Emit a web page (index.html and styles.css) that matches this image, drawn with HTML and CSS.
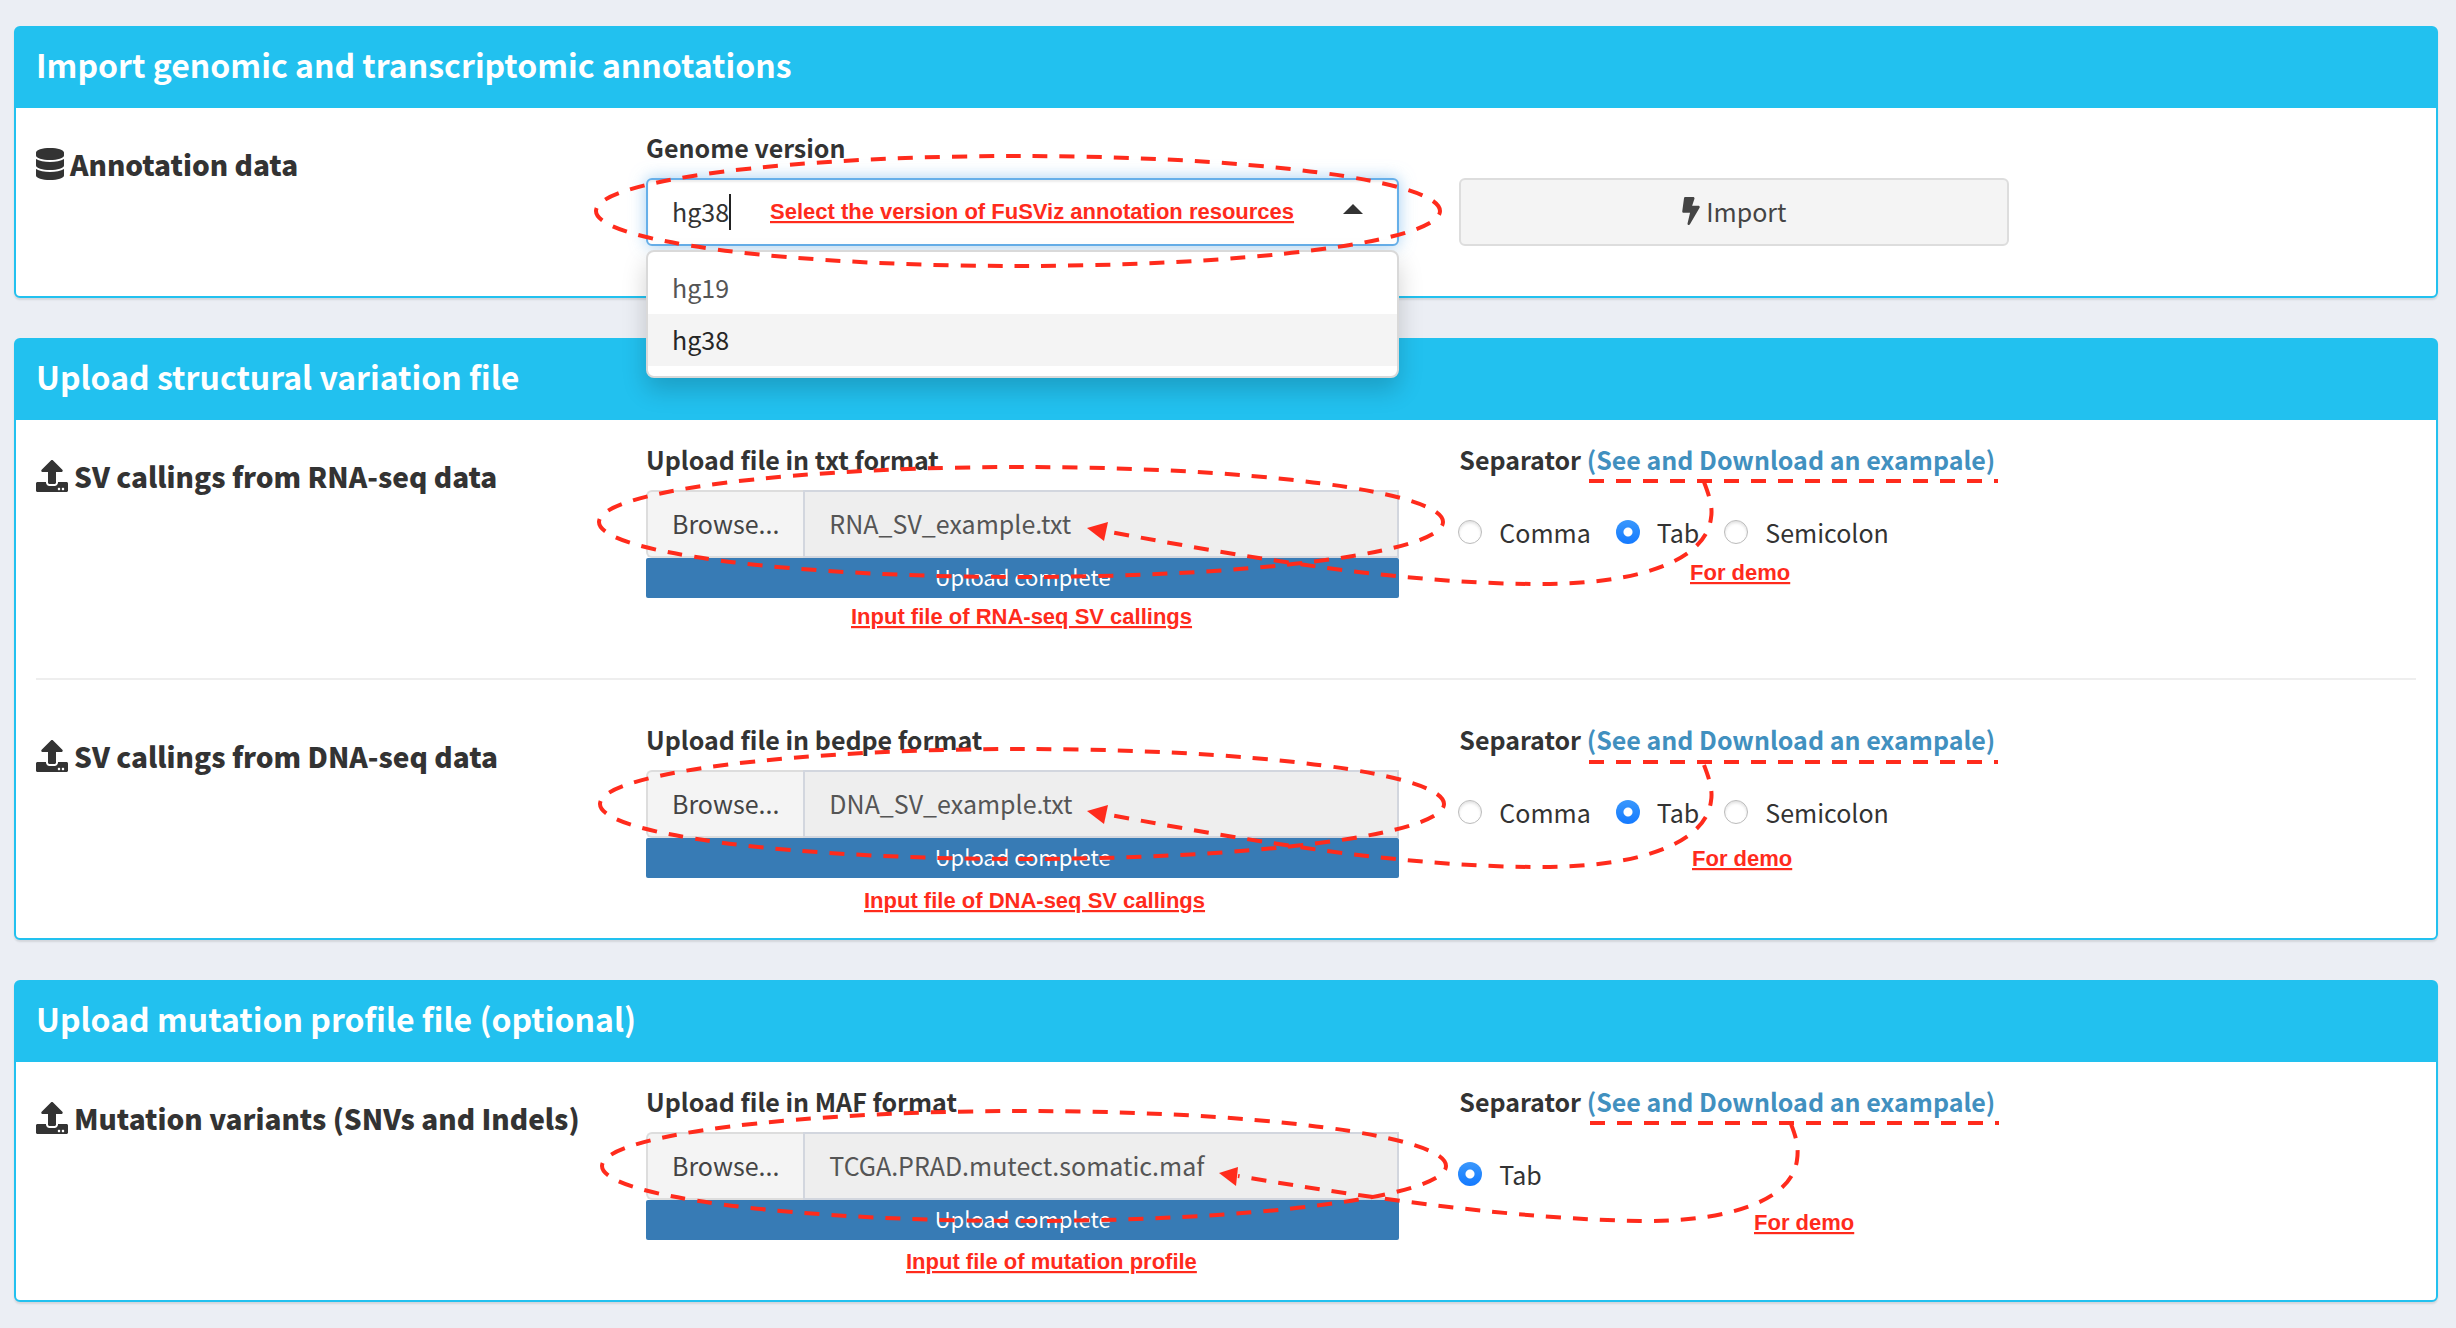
FILE: index.html
```html
<!DOCTYPE html>
<html lang="en">
<head>
<meta charset="utf-8">
<title>FuSViz data import</title>
<link rel="stylesheet" href="styles.css">
</head>
<body>
<svg class="sprite" aria-hidden="true">
  <symbol id="icon-database" viewBox="0 0 448 512"><path d="M448 73.143v45.714C448 159.143 347.667 192 224 192S0 159.143 0 118.857V73.143C0 32.857 100.333 0 224 0s224 32.857 224 73.143zM448 176v102.857C448 319.143 347.667 352 224 352S0 319.143 0 278.857V176c48.125 33.143 136.208 48.572 224 48.572S399.874 209.143 448 176zm0 160v102.857C448 479.143 347.667 512 224 512S0 479.143 0 438.857V336c48.125 33.143 136.208 48.572 224 48.572S399.874 369.143 448 336z"/></symbol>
  <symbol id="icon-upload" viewBox="0 0 512 512"><path d="M296 384h-80c-13.300 0-24-10.700-24-24V192h-87.700c-17.800 0-26.700-21.500-14.100-34.100L242.300 5.700c7.500-7.500 19.800-7.500 27.300 0l152.200 152.200c12.600 12.600 3.700 34.100-14.100 34.100H320v168c0 13.300-10.700 24-24 24zm216-8v112c0 13.300-10.700 24-24 24H24c-13.300 0-24-10.700-24-24V376c0-13.300 10.700-24 24-24h136v8c0 30.900 25.100 56 56 56h80c30.900 0 56-25.100 56-56v-8h136c13.300 0 24 10.700 24 24zm-124 88c0-11-9-20-20-20s-20 9-20 20 9 20 20 20 20-9 20-20zm64 0c0-11-9-20-20-20s-20 9-20 20 9 20 20 20 20-9 20-20z"/></symbol>
  <symbol id="icon-bolt" viewBox="0 0 320 512"><path d="M296 160H180.600l42.600-129.800C227.200 15 215.700 0 200 0H56C44 0 33.800 8.900 32.200 20.800l-32 240C-1.700 275.200 9.500 288 24 288h118.700L96.600 482.500c-3.600 15.200 8 29.500 23.300 29.500 8.400 0 16.400-4.400 20.800-12l176-304c9.300-15.900-2.200-36-20.700-36z"/></symbol>
</svg>

<main class="page">
  <section class="box">
    <h3 class="box-title">Import genomic and transcriptomic annotations</h3>
    <div class="box-body">
      <div class="row">
        <h4 class="row-title"><svg class="icon icon-db"><use href="#icon-database"/></svg>Annotation data</h4>
        <div class="field">
          <label class="field-label" for="genome">Genome version</label>
          <div class="select">
            <input class="select-input" id="genome" type="text" value="hg38" role="combobox" aria-expanded="true" aria-controls="genome-list">
            <span class="select-caret"></span>
            <span class="select-arrow"></span>
            <ul class="menu" id="genome-list" role="listbox">
              <li class="option" role="option">hg19</li>
              <li class="option option-active" role="option" aria-selected="true">hg38</li>
            </ul>
          </div>
          <svg class="notes">
            <ellipse class="dash" cx="372" cy="83" rx="422" ry="55"/>
            <text class="note" x="124" y="91">Select the version of FuSViz annotation resources</text>
          </svg>
        </div>
        <div class="side side-button">
          <button class="button" type="button"><svg class="icon-bolt"><use href="#icon-bolt"/></svg>Import</button>
        </div>
      </div>
    </div>
  </section>

  <section class="box">
    <h3 class="box-title">Upload structural variation file</h3>
    <div class="box-body">
      <div class="row">
        <h4 class="row-title"><svg class="icon"><use href="#icon-upload"/></svg>SV callings from RNA-seq data</h4>
        <div class="field">
          <label class="field-label" for="rna-file">Upload file in txt format</label>
          <div class="file">
            <button class="browse" type="button">Browse...</button>
            <input class="file-name" id="rna-file" type="text" value="RNA_SV_example.txt" readonly>
          </div>
          <div class="progress">Upload complete</div>
          <svg class="notes">
            <ellipse class="dash" cx="375" cy="82" rx="422" ry="55"/>
            <text class="note" x="205" y="184">Input file of RNA-seq SV callings</text>
          </svg>
        </div>
        <div class="side">
          <div class="field-label">Separator <a class="link" href="#rna-example">(See and Download an exampale)</a></div>
          <div class="radios">
            <label class="radio"><input type="radio" name="rna-sep">Comma</label>
            <label class="radio"><input type="radio" name="rna-sep" checked>Tab</label>
            <label class="radio"><input type="radio" name="rna-sep">Semicolon</label>
          </div>
          <svg class="notes">
            <path class="dash dash-line" d="M130 41H539"/>
            <path class="dash dash-line" d="M245 42C250 55 254 67 252 78C247 120 181 145 76 144C-59 143 -199 120 -354 91"/>
            <path class="head" d="M-372 88L-351 82L-355 101Z"/>
            <text class="note" x="231" y="140">For demo</text>
          </svg>
        </div>
      </div>
      <hr class="divider">
      <div class="row">
        <h4 class="row-title"><svg class="icon"><use href="#icon-upload"/></svg>SV callings from DNA-seq data</h4>
        <div class="field">
          <label class="field-label" for="dna-file">Upload file in bedpe format</label>
          <div class="file">
            <button class="browse" type="button">Browse...</button>
            <input class="file-name" id="dna-file" type="text" value="DNA_SV_example.txt" readonly>
          </div>
          <div class="progress">Upload complete</div>
          <svg class="notes">
            <ellipse class="dash" cx="376" cy="84" rx="422" ry="55"/>
            <text class="note" x="218" y="188">Input file of DNA-seq SV callings</text>
          </svg>
        </div>
        <div class="side">
          <div class="field-label">Separator <a class="link" href="#dna-example">(See and Download an exampale)</a></div>
          <div class="radios">
            <label class="radio"><input type="radio" name="dna-sep">Comma</label>
            <label class="radio"><input type="radio" name="dna-sep" checked>Tab</label>
            <label class="radio"><input type="radio" name="dna-sep">Semicolon</label>
          </div>
          <svg class="notes">
            <path class="dash dash-line" d="M130 42H539"/>
            <path class="dash dash-line" d="M245 45C250 58 254 70 252 81C247 123 181 148 76 147C-59 146 -199 123 -354 94"/>
            <path class="head" d="M-372 91L-351 85L-355 104Z"/>
            <text class="note" x="233" y="146">For demo</text>
          </svg>
        </div>
      </div>
    </div>
  </section>

  <section class="box">
    <h3 class="box-title">Upload mutation profile file (optional)</h3>
    <div class="box-body">
      <div class="row">
        <h4 class="row-title"><svg class="icon"><use href="#icon-upload"/></svg>Mutation variants (SNVs and Indels)</h4>
        <div class="field">
          <label class="field-label" for="maf-file">Upload file in MAF format</label>
          <div class="file">
            <button class="browse" type="button">Browse...</button>
            <input class="file-name" id="maf-file" type="text" value="TCGA.PRAD.mutect.somatic.maf" readonly>
          </div>
          <div class="progress">Upload complete</div>
          <svg class="notes">
            <ellipse class="dash" cx="378" cy="84" rx="422" ry="55"/>
            <text class="note" x="260" y="187">Input file of mutation profile</text>
          </svg>
        </div>
        <div class="side">
          <div class="field-label">Separator <a class="link" href="#maf-example">(See and Download an exampale)</a></div>
          <div class="radios">
            <label class="radio"><input type="radio" name="maf-sep" checked>Tab</label>
          </div>
          <svg class="notes">
            <path class="dash dash-line" d="M131 41H540"/>
            <path class="dash dash-line" d="M332 42C337 55 340 65 338 78C333 118 271 140 181 139C61 137 -79 118 -221 94"/>
            <path class="head" d="M-240 91L-221 85L-223 104Z"/>
            <text class="note" x="295" y="148">For demo</text>
          </svg>
        </div>
      </div>
    </div>
  </section>
</main>
</body>
</html>
```
FILE: styles.css
```css
* { box-sizing: border-box; }

body {
  margin: 0;
  background: #ebeef4;
  color: #333;
  font: 25px/40px "Noto Sans CJK SC", "Noto Sans", sans-serif;
}

input, button { font: inherit; }

.sprite { position: absolute; width: 0; height: 0; }

.page {
  display: flex;
  flex-direction: column;
  gap: 40px;
  padding: 26px 18px 26px 14px;
}

.box {
  border: 2px solid #22c1ef;
  border-radius: 6px;
  background: #fff;
  box-shadow: 0 2px 2px rgba(0, 0, 0, .1);
}

.box-title {
  margin: 0;
  padding: 16px 20px 24px;
  background: #22c1ef;
  color: #fff;
  font-size: 32px;
  line-height: 40px;
  font-weight: 700;
}

.box-body { padding: 20px; }

.row {
  display: grid;
  grid-template-columns: repeat(12, minmax(0, 1fr));
  column-gap: 60px;
}

.row-title {
  grid-column: span 3;
  display: flex;
  align-items: center;
  align-self: start;
  gap: 6px;
  margin: 16px 0 0;
  font-size: 28px;
  line-height: 40px;
  font-weight: 900;
  white-space: nowrap;
}

.icon { flex: none; width: 32px; height: 32px; fill: currentColor; }
.icon-db { width: 28px; }

.field { grid-column: span 4; position: relative; padding-bottom: 40px; }
.side { grid-column: span 3; position: relative; }

.field-label {
  display: block;
  margin-bottom: 12px;
  line-height: 38px;
  font-weight: 700;
  white-space: nowrap;
}

.link { color: #4190bf; text-decoration: none; }

.divider { margin: 40px 0; border: 0; border-top: 2px solid #eee; }

/* genome version picker */
.select {
  position: relative;
  display: flex;
  align-items: center;
  height: 68px;
  margin-bottom: -10px;
  padding: 0 34px 0 24px;
  border: 2px solid #66afe9;
  border-radius: 6px;
  background: #fff;
  box-shadow: inset 0 2px 2px rgba(0, 0, 0, .075), 0 0 16px rgba(102, 175, 233, .6);
}

.select-input {
  width: 57px;
  padding: 0 0 2px;
  border: 0;
  outline: 0;
  background: transparent;
  color: #333;
}

.select-caret { width: 2px; height: 36px; background: #222; }

.select-arrow {
  margin: 0 0 6px auto;
  border: 10px solid transparent;
  border-top: 0;
  border-bottom-color: #333;
}

.menu {
  position: absolute;
  z-index: 2;
  top: 70px;
  left: -2px;
  right: -2px;
  margin: 0;
  padding: 10px 0;
  border: 2px solid #d9d9d9;
  border-radius: 8px;
  background: #fff;
  box-shadow: 0 12px 24px rgba(0, 0, 0, .18);
  list-style: none;
}

.option { padding: 0 24px 2px; line-height: 50px; color: #555; }
.option-active { background: #f4f4f4; color: #262626; }

.side-button { padding-top: 50px; }

.button {
  display: flex;
  align-items: center;
  justify-content: center;
  gap: 6px;
  width: 100%;
  height: 68px;
  padding: 0 0 2px;
  border: 2px solid #ddd;
  border-radius: 6px;
  background: #f4f4f4;
  color: #444;
}

.icon-bolt { width: 18px; height: 28px; fill: currentColor; }

/* file picker */
.file { display: flex; height: 68px; }

.browse {
  padding: 0 24px 2px;
  border: 2px solid #ddd;
  border-right: 0;
  border-radius: 6px 0 0 6px;
  background: #f4f4f4;
  color: #444;
}

.file-name {
  flex: 1;
  min-width: 0;
  padding: 0 24px 2px;
  border: 2px solid #d2d6de;
  border-radius: 0;
  background: #eee;
  color: #555;
}

.progress {
  height: 40px;
  border-radius: 2px;
  background: #377bb5;
  color: #fff;
  font-size: 22px;
  line-height: 36px;
  text-align: center;
}

.radios { display: flex; gap: 26px; padding-top: 22px; }

.radio { display: flex; align-items: center; gap: 17px; line-height: 40px; }

.radio input {
  appearance: none;
  width: 24px;
  height: 24px;
  margin: 0 0 0 -1px;
  border: 1px solid #bbb;
  border-radius: 50%;
  background: #fff;
  box-shadow: inset 0 2px 3px rgba(0, 0, 0, .12);
}

.radio input:checked {
  border: 0;
  background: radial-gradient(circle, #fff 4px, transparent 5px), linear-gradient(#3a98fc, #147aff);
  box-shadow: none;
}

/* red guide marks drawn over the form */
.notes {
  position: absolute;
  z-index: 3;
  top: 0;
  left: 0;
  width: 100%;
  height: 100%;
  overflow: visible;
  pointer-events: none;
}

.dash {
  fill: none;
  stroke: #ff2b1c;
  stroke-width: 4;
  stroke-dasharray: 15 12;
  stroke-dashoffset: 11;
}

.dash-line { stroke-dashoffset: 0; }

.head { fill: #ff2b1c; }

.note {
  fill: #ff2b1c;
  font: 700 22px "Liberation Sans", Arial, sans-serif;
  text-decoration: underline;
}
```
